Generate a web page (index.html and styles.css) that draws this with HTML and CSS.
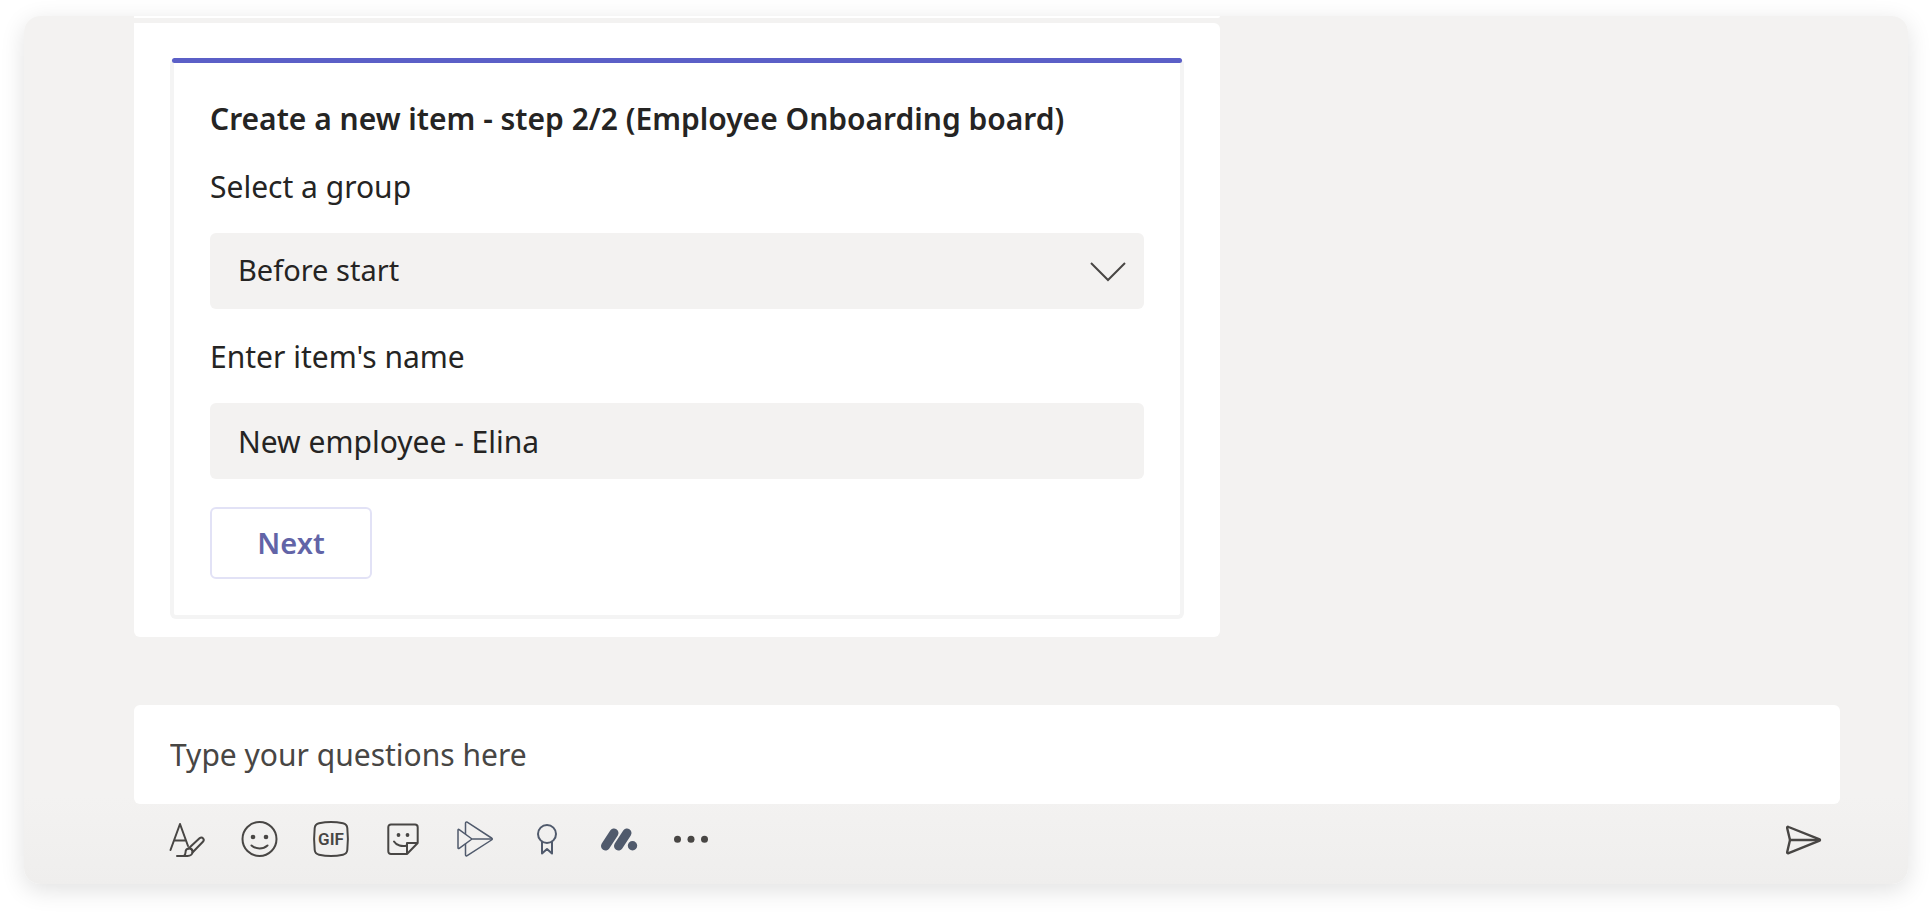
FILE: index.html
```html
<!DOCTYPE html>
<html lang="en">
<head>
  <meta charset="UTF-8">
  <meta name="viewport" content="width=device-width, initial-scale=1.0">
  <title>Create a new item</title>
  <link rel="stylesheet" href="styles.css">
</head>
<body>
  <main class="chat">
    <div class="messages">
      <div class="message message-prev"></div>
      <div class="message">
        <form class="card">
          <h1 class="card-title">Create a new item - step 2/2 (Employee Onboarding board)</h1>

          <label class="label" for="group">Select a group</label>
          <div class="select-wrap">
            <select class="field" id="group">
              <option>Before start</option>
            </select>
            <svg class="chevron" viewBox="0 0 36 22">
              <path d="M1 2l17 17L35 2"></path>
            </svg>
          </div>

          <label class="label" for="itemName">Enter item's name</label>
          <input class="field" id="itemName" type="text" value="New employee - Elina">

          <button class="next-btn" type="button">Next</button>
        </form>
      </div>
    </div>

    <div class="composer">
      <input class="composer-input" type="text" placeholder="Type your questions here" aria-label="Type your questions here">
      <div class="toolbar">
        <button class="tool" type="button" aria-label="Format">
          <svg class="icon" viewBox="0 0 36 36">
            <path d="M1.500 29L11 3l8 22M5.500 19.500H17"></path>
            <path d="M8 35h10.500c3 0 5-1.800 5-4.200 0-2-1.400-3.300-3.300-3.300-2.300 0-3.700 1.700-3.700 4 0 1.500-.6 2.700-1.700 3.500"></path>
            <path d="M19.500 27.500L30.500 17.300c1.200-1 2.700-1 3.600 0s.8 2.400-.2 3.500L23.500 31.500M20.500 26.500l3.500 3.500"></path>
          </svg>
        </button>
        <button class="tool" type="button" aria-label="Emoji">
          <svg class="icon" viewBox="0 0 36 36">
            <circle cx="18.500" cy="18" r="17"></circle>
            <path d="M10.500 24.500c4.500 4 11.500 4 16 0"></path>
            <circle class="solid" cx="12" cy="16" r="2.300"></circle>
            <circle class="solid" cx="25" cy="16" r="2.300"></circle>
          </svg>
        </button>
        <button class="tool" type="button" aria-label="GIF">
          <svg class="icon" viewBox="0 0 36 36">
            <path d="M6 2.300c8-1.700 16-1.700 24 0 2.600.6 4 2 4.300 4.700.8 7.300.8 14.700 0 22-.3 2.700-1.700 4.100-4.300 4.700-8 1.700-16 1.700-24 0-2.600-.6-4-2-4.300-4.700-.8-7.300-.8-14.700 0-22C2 4.300 3.400 2.900 6 2.300z"></path>
            <text class="gif-text" x="18" y="24">GIF</text>
          </svg>
        </button>
        <button class="tool" type="button" aria-label="Sticker">
          <svg class="icon" viewBox="0 0 36 36">
            <path d="M22 33H6c-1.700 0-2.700-1-2.700-2.700V6.200c0-1.700 1-2.700 2.700-2.700h24c1.700 0 2.700 1 2.700 2.700V22L22 33V22h10.700"></path>
            <path d="M9 20.500c2.500 4 8 5.500 13 4"></path>
            <circle class="solid" cx="13.500" cy="14" r="1.900"></circle>
            <circle class="solid" cx="22.500" cy="14" r="1.900"></circle>
          </svg>
        </button>
        <button class="tool" type="button" aria-label="Stream">
          <svg class="icon icon-app" viewBox="0 0 36 36">
            <path d="M8.500 12.800V2.200c0-.9.900-1.500 1.700-1L34.500 17c.9.600.9 1.400 0 2L10.200 34.700c-.8.500-1.700 0-1.700-1V23"></path>
            <path d="M1 9.200v17.600c0 .8.500 1 1.200.6L15 18 2.200 8.600C1.500 8.100 1 8.400 1 9.200zM15 18h20"></path>
          </svg>
        </button>
        <button class="tool" type="button" aria-label="Praise">
          <svg class="icon icon-app" viewBox="0 0 36 36">
            <circle class="medal" cx="18" cy="13" r="9"></circle>
            <path class="medal" d="M13 21v11.500l5-4.500 5 4.500V21"></path>
          </svg>
        </button>
        <button class="tool" type="button" aria-label="monday.com">
          <svg class="icon icon-app" viewBox="0 0 36 36">
            <path class="bar" d="M4.500 25L13 12M17.500 25L26 12"></path>
            <circle class="dot" cx="31.500" cy="24.800" r="4.700"></circle>
          </svg>
        </button>
        <button class="tool" type="button" aria-label="More options">
          <svg class="icon" viewBox="0 0 36 36">
            <circle class="solid" cx="4.500" cy="18.300" r="3.500"></circle>
            <circle class="solid" cx="18" cy="18.300" r="3.500"></circle>
            <circle class="solid" cx="31.500" cy="18.300" r="3.500"></circle>
          </svg>
        </button>
        <button class="tool send" type="button" aria-label="Send">
          <svg class="icon" viewBox="0 0 36 36">
            <path d="M1.200 7.200C1 6 1.500 5.500 2.600 6L33 18.200c1.200.5 1.200 1.200 0 1.700L2.600 32.200c-1.100.4-1.600-.1-1.400-1.200L4 19z"></path>
            <path d="M4 19h30"></path>
          </svg>
        </button>
      </div>
    </div>
  </main>
</body>
</html>
```
FILE: styles.css
```css
:root {
  --panel-bg: #f3f2f1;
  --text-color: #252423;
  --icon-color: #484644;
  --app-color: #505a6c;
  --accent: #5b5fc7;
}

* {
  margin: 0;
  padding: 0;
  box-sizing: border-box;
}

body {
  padding: 16px 23px 32px 24px;
  background: #ffffff;
  color: var(--text-color);
  font-family: 'Segoe UI', 'Noto Sans', sans-serif;
  font-size: 30px;
  line-height: 40px;
}

.chat {
  background: linear-gradient(to bottom, var(--panel-bg) 90%, #efeeed);
  border-radius: 16px;
  padding: 0 68px 27px 110px;
  box-shadow: 0 6px 24px rgba(0, 0, 0, 0.12);
}

.message {
  max-width: 1086px;
  padding: 35px 36px 18px;
  background: #ffffff;
  border-radius: 0 6px 6px 6px;
}

.message-prev {
  height: 2px;
  padding: 0;
  margin-bottom: 5px;
  border-radius: 0 0 6px 0;
}

.card {
  position: relative;
  padding: 41px 36px 36px;
  border: 4px solid #f4f4f4;
  border-top: none;
  border-radius: 6px;
}

/* accent strip along the top edge */
.card::before {
  content: "";
  position: absolute;
  top: 0;
  left: -2px;
  right: -2px;
  height: 5px;
  border-radius: 3px;
  background: var(--accent);
}

.card-title {
  font-size: 30px;
  font-weight: 600;
  margin-bottom: 28px;
}

.label {
  display: block;
  margin-bottom: 26px;
}

.field {
  display: block;
  width: 100%;
  height: 76px;
  padding: 0 28px;
  margin-bottom: 28px;
  border: none;
  border-radius: 6px;
  background: var(--panel-bg);
  color: inherit;
  font: inherit;
  appearance: none;
}

.select-wrap {
  position: relative;
}

.select-wrap .field {
  padding-bottom: 2px;
  font-size: 29px;
}

.chevron {
  position: absolute;
  right: 18px;
  top: 28px;
  width: 36px;
  height: 22px;
  fill: none;
  stroke: var(--icon-color);
  stroke-width: 2;
  pointer-events: none;
}

.next-btn {
  display: block;
  height: 72px;
  min-width: 162px;
  padding: 0 40px;
  border: 2px solid #e2e2f6;
  border-radius: 6px;
  background: #ffffff;
  color: #6264a7;
  font: inherit;
  font-size: 29px;
  font-weight: 600;
  cursor: pointer;
}

.composer {
  margin-top: 68px;
}

.composer-input {
  display: block;
  width: 100%;
  height: 99px;
  padding: 0 36px;
  border: none;
  border-radius: 6px;
  background: #ffffff;
  color: inherit;
  font: inherit;
}

.composer-input::placeholder {
  color: #484644;
  opacity: 1;
}

.toolbar {
  display: flex;
  gap: 36px;
  padding: 17px 18px 0 35px;
}

.tool {
  width: 36px;
  height: 36px;
  border: none;
  background: none;
  color: var(--icon-color);
  cursor: pointer;
}

.send {
  margin-left: auto;
}

.icon {
  display: block;
  width: 36px;
  height: 36px;
  fill: none;
  stroke: currentColor;
  stroke-width: 2;
  stroke-linejoin: round;
  stroke-linecap: round;
  overflow: visible;
}

.icon-app {
  color: var(--app-color);
  stroke-width: 1.5;
}

.send .icon {
  stroke-width: 2.4;
}

.solid,
.dot {
  fill: currentColor;
  stroke: none;
}

.medal {
  stroke-width: 2;
}

.bar {
  stroke-width: 9;
}

.gif-text {
  fill: currentColor;
  stroke: none;
  font-family: 'Liberation Sans Narrow', Roboto, sans-serif;
  font-size: 17px;
  font-weight: 600;
  text-anchor: middle;
}
```
